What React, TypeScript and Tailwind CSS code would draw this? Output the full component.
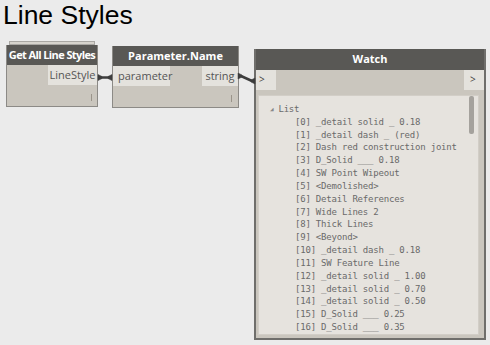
import React from "react";

const items = [
  "[0] _detail solid _ 0.18",
  "[1] _detail dash _ (red)",
  "[2] Dash red construction joint",
  "[3] D_Solid ___ 0.18",
  "[4] SW Point Wipeout",
  "[5] <Demolished>",
  "[6] Detail References",
  "[7] Wide Lines 2",
  "[8] Thick Lines",
  "[9] <Beyond>",
  "[10] _detail dash _ 0.18",
  "[11] SW Feature Line",
  "[12] _detail solid _ 1.00",
  "[13] _detail solid _ 0.70",
  "[14] _detail solid _ 0.50",
  "[15] D_Solid ___ 0.25",
  "[16] D_Solid ___ 0.35",
];

const sans = { fontFamily: '"Open Sans", "Noto Sans", sans-serif' };

function NodeHeader({ title, tight }: { title: string; tight?: boolean }) {
  return (
    <div
      className={
        tight
          ? "h-[20px] bg-[#595855] text-white font-bold text-[11px] tracking-[-0.6px] whitespace-nowrap flex items-center justify-center"
          : "h-[20px] bg-[#595855] text-white font-bold text-[11px] tracking-[0px] whitespace-nowrap flex items-center justify-center"
      }
    >
      {title}
    </div>
  );
}

function Wire({ x1, y1, x2, y2 }: { x1: number; y1: number; x2: number; y2: number }) {
  return (
    <g stroke="#3d3d3d" fill="#3d3d3d">
      <line x1={x1 + 3} y1={y1} x2={x2 - 3} y2={y2} strokeWidth={2.5} />
      <path d={`M${x1} ${y1 - 3} L${x1 + 4} ${y1 - 1} L${x1 + 4} ${y1 + 1} L${x1} ${y1 + 3} Z`} strokeWidth={0.5} />
      <path d={`M${x2} ${y2 - 3} L${x2 - 4} ${y2 - 1} L${x2 - 4} ${y2 + 1} L${x2} ${y2 + 3} Z`} strokeWidth={0.5} />
    </g>
  );
}

export default function App() {
  return (
    <div className="relative w-[490px] h-[345px] bg-[#ebebeb] overflow-hidden" style={sans}>
      <h1
        className="absolute left-[3px] top-0 text-[26.5px] leading-[30px] text-black"
        style={{ fontFamily: '"Liberation Sans", Arial, sans-serif' }}
      >
        Line Styles
      </h1>

      {/* Get All Line Styles */}
      <div className="absolute left-[6px] top-[41px] w-[92px]">
        <div className="mx-[3px] h-[4px] border border-[#a9a7a3] bg-[#d6d3cd]" />
        <div className="border-x border-b border-[#8c8a86] bg-[#cac6be] h-[62px]">
          <NodeHeader title="Get All Line Styles" tight />
          <div className="flex justify-end">
            <div className="w-[49px] h-[20px] bg-[#e4e2dd] text-[#555] text-[11px] flex items-center justify-center">
              LineStyle
            </div>
          </div>
          <div className="flex justify-end pr-[5px] pt-[9px]">
            <div className="w-px h-[7px] bg-[#9a948a]" />
          </div>
        </div>
      </div>

      {/* Parameter.Name */}
      <div className="absolute left-[112px] top-[46px] w-[127px]">
        <div className="border-x border-b border-[#8c8a86] bg-[#cac6be] h-[62px]">
          <NodeHeader title="Parameter.Name" />
          <div className="flex justify-between">
            <div className="w-[57px] h-[20px] bg-[#e4e2dd] text-[#555] text-[11px] flex items-center pl-[5px]">
              parameter
            </div>
            <div className="w-[36px] h-[20px] bg-[#e4e2dd] text-[#555] text-[11px] flex items-center justify-center">
              string
            </div>
          </div>
          <div className="flex justify-end pr-[6px] pt-[9px]">
            <div className="w-px h-[7px] bg-[#9a948a]" />
          </div>
        </div>
      </div>

      {/* Watch */}
      <div className="absolute left-[254px] top-[49px] w-[232px] h-[291px] bg-[#cac6be] border-x-2 border-b-2 border-[#6f6e6b] flex flex-col">
        <div className="h-[21px] bg-[#595855] text-white font-bold text-[11px] flex items-center justify-center">
          Watch
        </div>
        <div className="flex justify-between h-[20px]">
          <div className="w-[20px] bg-[#e4e2dd] text-[#444] text-[10px] flex items-center pl-[3px]">&gt;</div>
          <div className="w-[20px] bg-[#e4e2dd] text-[#444] text-[10px] flex items-center pl-[6px]">&gt;</div>
        </div>
        <div
          className="relative mt-[5px] mx-[2px] mr-[5px] flex-1 mb-[3px] bg-[#e6e3de] border border-[#d2cec7] pl-[11px] pt-[7px]"
          style={{ fontFamily: '"DejaVu Sans Mono", "Liberation Mono", monospace' }}
        >
          <div className="absolute right-[4px] top-[0px] w-[5px] h-[38px] rounded-[2px] bg-[#a5a29d]" />
          <div className="flex items-center text-[9px] leading-[12.85px] text-[#6a6a6a] tracking-[-0.2px]">
            <span className="text-[6px] text-[#888] mr-[5px]">◢</span>
            <span>List</span>
          </div>
          <div className="pl-[25px]">
            {items.map((t) => (
              <div key={t} className="text-[9px] leading-[12.85px] text-[#6a6a6a] tracking-[-0.2px] whitespace-pre">
                {t}
              </div>
            ))}
          </div>
        </div>
      </div>

      <svg className="absolute left-0 top-0" width={490} height={345}>
        <Wire x1={98} y1={77.5} x2={112} y2={77.5} />
        <Wire x1={238} y1={76} x2={255} y2={81} />
      </svg>
    </div>
  );
}
